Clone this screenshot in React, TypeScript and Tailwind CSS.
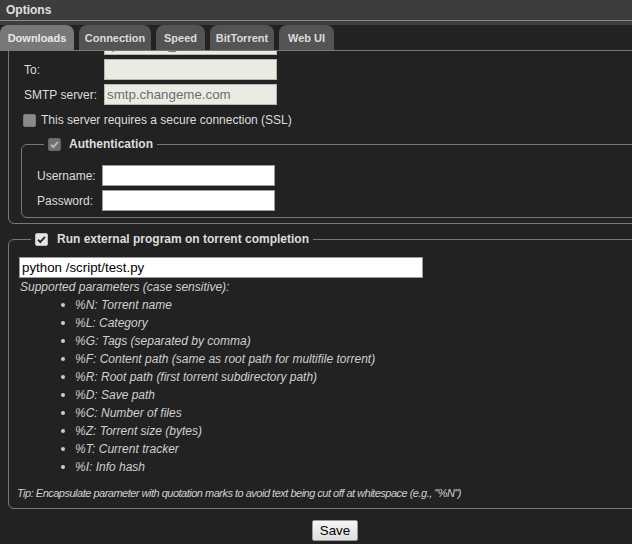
import React from "react";

function Check({ kind }: { kind: "off" | "disabledOn" | "on" }) {
  if (kind === "off") {
    return <span className="inline-block w-[13px] h-[13px] rounded-[2px] bg-[#8a8a8a] border border-[#7a7a7a] shrink-0" />;
  }
  const bg = kind === "on" ? "bg-[#e6e6e6] border-[#bdbdbd]" : "bg-[#6f6f6f] border-[#666]";
  const stroke = kind === "on" ? "#333" : "#b5b5b5";
  return (
    <span className={`inline-flex items-center justify-center w-[13px] h-[13px] rounded-[2px] border shrink-0 ${bg}`}>
      <svg width="11" height="11" viewBox="0 0 11 11">
        <path d="M2 5.8 L4.3 8 L9 2.8" fill="none" stroke={stroke} strokeWidth="2" />
      </svg>
    </span>
  );
}

function Row({ label, labelW, value, disabled }: { label: string; labelW: string; value?: string; disabled?: boolean }) {
  return (
    <div className="flex items-center h-[25px]">
      <div className={`${labelW} pl-[3px]`}>{label}</div>
      <div
        className={`w-[173px] h-[21px] border flex items-center pl-[2px] text-[13.33px] overflow-hidden whitespace-nowrap ${
          disabled ? "bg-[#ebebe4] border-[#b8b8b0] text-[#6d6d6d]" : "bg-white border-[#9a9a9a] text-black"
        }`}
      >
        {value ?? ""}
      </div>
    </div>
  );
}

const params = [
  "%N: Torrent name",
  "%L: Category",
  "%G: Tags (separated by comma)",
  "%F: Content path (same as root path for multifile torrent)",
  "%R: Root path (first torrent subdirectory path)",
  "%D: Save path",
  "%C: Number of files",
  "%Z: Torrent size (bytes)",
  "%T: Current tracker",
  "%I: Info hash",
];

const tabs = [
  { name: "Downloads", w: "w-[74px]", active: true },
  { name: "Connection", w: "w-[72px]" },
  { name: "Speed", w: "w-[49px]" },
  { name: "BitTorrent", w: "w-[64px]" },
  { name: "Web UI", w: "w-[55px]" },
];

export default function App() {
  return (
    <div className="w-[632px] h-[544px] overflow-hidden bg-[#222222] font-['Liberation_Sans',Arial,sans-serif] text-[12px] text-[#dddddd]">
      <div className="w-[670px]">
        <div className="h-[21px] bg-[#3d3d3d] border-b border-[#8a8a8a] px-[6px] font-bold text-[12px] leading-[20px] text-[#e0e0e0]">
          Options
        </div>
        <div className="h-[4px] bg-[#3d3d3d]" />
        <div className="flex gap-[5px] h-[26px] border-b border-[#777]">
          {tabs.map((t) => (
            <div
              key={t.name}
              className={`${t.w} h-[25px] pt-[1px] rounded-t-[8px] flex items-center justify-center font-bold text-[11px] ${
                t.active ? "bg-[#787878] text-[#e8e8e8]" : "bg-[#545454] text-[#dddddd]"
              }`}
            >
              {t.name}
            </div>
          ))}
        </div>

        <div className="h-[493px] overflow-hidden">
          <div className="-mt-[47px]">
            <fieldset className="mx-2 border border-[#777] rounded-[6px] px-[12px] pt-[10px] pb-[5px]">
              <legend className="ml-[10px] px-1">
                <span className="flex items-center gap-[8px] h-[18px] font-bold">
                  <Check kind="on" />
                  Email notification upon download completion
                </span>
              </legend>
              <Row label="From:" labelW="w-[83px]" value="qBittorrent_notification@example.com" disabled />
              <Row label="To:" labelW="w-[83px]" disabled />
              <Row label="SMTP server:" labelW="w-[83px]" value="smtp.changeme.com" disabled />
              <div className="flex items-center h-[18px] mt-[4px] pl-[2px] gap-[5px]">
                <Check kind="off" />
                <span>This server requires a secure connection (SSL)</span>
              </div>
              <fieldset className="mt-[6px] border border-[#777] rounded-[6px] pl-[12px] pt-[10px] pb-[4px]">
                <legend className="ml-[10px] px-1">
                  <span className="flex items-center gap-[8px] h-[18px] font-bold">
                    <Check kind="disabledOn" />
                    Authentication
                  </span>
                </legend>
                <Row label="Username:" labelW="w-[68px]" />
                <Row label="Password:" labelW="w-[68px]" />
              </fieldset>
            </fieldset>

            <fieldset className="mx-2 mt-[6px] border border-[#777] rounded-[6px] px-[10px] pt-[9px] pb-[6px]">
              <legend className="ml-[12px] px-1">
                <span className="flex items-center gap-[9px] h-[18px] font-bold">
                  <Check kind="on" />
                  Run external program on torrent completion
                </span>
              </legend>
              <div className="w-[404px] h-[21px] bg-white border border-[#9a9a9a] flex items-center pl-[2px] text-[13.33px] text-black">
                python /script/test.py
              </div>
              <div className="italic leading-[18px] text-[#d0d0d0] pl-[1px]">Supported parameters (case sensitive):</div>
              <ul className="mb-[8px]">
                {params.map((p) => (
                  <li key={p} className="flex items-center h-[18px] italic text-[#d0d0d0]">
                    <span className="ml-[42px] w-[4px] h-[4px] rounded-full bg-[#cfcfcf] mr-[10px]" />
                    {p}
                  </li>
                ))}
              </ul>
              <div className="italic leading-[18px] text-[11px] tracking-[-0.5px] text-[#d0d0d0] -ml-[2px]">
                Tip: Encapsulate parameter with quotation marks to avoid text being cut off at whitespace (e.g., "%N")
              </div>
            </fieldset>

            <div className="flex justify-center mt-[11px]">
              <button className="w-[46px] h-[21px] border border-[#999] rounded-[2px] bg-gradient-to-b from-[#f6f6f6] to-[#dedede] text-[13.33px] text-black">
                Save
              </button>
            </div>
          </div>
        </div>
      </div>
    </div>
  );
}
